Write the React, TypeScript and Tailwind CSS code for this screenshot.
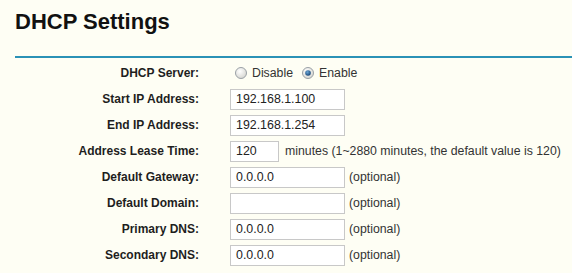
import React from "react";

const font = { fontFamily: '"Liberation Sans", Arial, sans-serif' };

function Radio({ checked }: { checked?: boolean }) {
  return (
    <svg width="12" height="12" viewBox="0 0 12 12" className="shrink-0">
      <defs>
        <radialGradient id={checked ? "rg1" : "rg0"} cx="0.4" cy="0.35" r="0.7">
          <stop offset="0" stopColor="#ffffff" />
          <stop offset="1" stopColor="#d4d4cf" />
        </radialGradient>
        <radialGradient id="dot" cx="0.4" cy="0.35" r="0.7">
          <stop offset="0" stopColor="#6aa6d6" />
          <stop offset="1" stopColor="#123f70" />
        </radialGradient>
      </defs>
      <circle cx="6" cy="6" r="5.5" fill={`url(#${checked ? "rg1" : "rg0"})`} stroke="#9aa0a6" strokeWidth="1" />
      {checked && <circle cx="6" cy="6" r="2.8" fill="url(#dot)" />}
    </svg>
  );
}

function Row({ label, children }: { label: string; children: React.ReactNode }) {
  return (
    <div className="flex items-center h-[26px]">
      <div className="w-[184px] text-right text-[12px] font-bold text-[#1e1e1e] leading-[14px]">{label}</div>
      <div className="pl-[31px] flex items-center text-[12.3px] text-[#333] leading-[14px]">{children}</div>
    </div>
  );
}

function Field({ value, w = "w-[115px]" }: { value: string; w?: string }) {
  return (
    <div className={`${w} h-[21px] bg-white border border-[#c8c8c8] pl-[5px] flex items-center text-[12.4px] text-[#222]`}>
      {value}
    </div>
  );
}

export default function App() {
  return (
    <div style={font} className="w-[572px] h-[273px] bg-[#fefef4] pl-[15px] pt-[9px] overflow-hidden">
      <h1 className="text-[22px] leading-[26px] font-bold text-[#111]">DHCP Settings</h1>
      <div className="mt-[21px] h-[2px] bg-[#2b92b6]" />
      <div className="pt-[2px]">
        <Row label="DHCP Server:">
          <div className="flex items-center pl-[5px]">
            <Radio />
            <span className="ml-[5px]">Disable</span>
            <span className="ml-[9px]"><Radio checked /></span>
            <span className="ml-[5px]">Enable</span>
          </div>
        </Row>
        <Row label="Start IP Address:"><Field value="192.168.1.100" /></Row>
        <Row label="End IP Address:"><Field value="192.168.1.254" /></Row>
        <Row label="Address Lease Time:">
          <Field value="120" w="w-[49px]" />
          <span className="ml-[6px]">minutes (1~2880 minutes, the default value is 120)</span>
        </Row>
        <Row label="Default Gateway:">
          <Field value="0.0.0.0" />
          <span className="ml-[4px]">(optional)</span>
        </Row>
        <Row label="Default Domain:">
          <Field value="" />
          <span className="ml-[4px]">(optional)</span>
        </Row>
        <Row label="Primary DNS:">
          <Field value="0.0.0.0" />
          <span className="ml-[4px]">(optional)</span>
        </Row>
        <Row label="Secondary DNS:">
          <Field value="0.0.0.0" />
          <span className="ml-[4px]">(optional)</span>
        </Row>
      </div>
    </div>
  );
}
